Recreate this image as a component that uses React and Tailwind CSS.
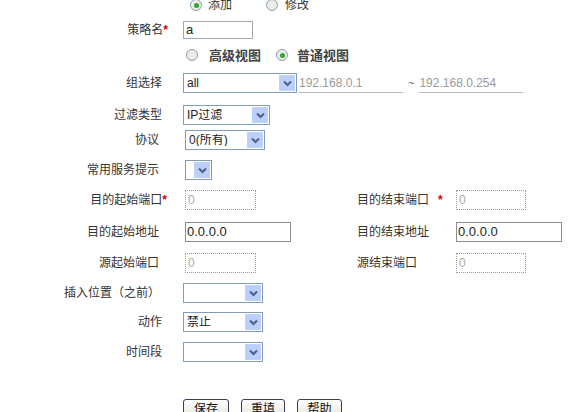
const cjk = { fontFamily: '"Liberation Sans", "Noto Sans CJK SC", sans-serif' };

function Chevron() {
  return (
    <svg width="9" height="7" viewBox="0 0 9 7">
      <path d="M1 1.5 L4.5 5 L8 1.5" fill="none" stroke="#4d6185" strokeWidth="2" />
    </svg>
  );
}

function Select({ value, className }) {
  return (
    <div className={`flex h-[20px] items-center border border-[#7f9db9] bg-white ${className}`}>
      <span className="flex-1 truncate pl-[3px] text-[12px] leading-none text-[#222]">{value}</span>
      <span className="m-[1px] flex h-[16px] w-[16px] shrink-0 items-center justify-center border border-[#c0d2f8] bg-[#bccffa]">
        <Chevron />
      </span>
    </div>
  );
}

function Radio({ checked }) {
  return (
    <span className="flex h-[12px] w-[12px] shrink-0 items-center justify-center rounded-full border border-[#8aa0b6] bg-[#ecece6]">
      {checked && <span className="h-[5px] w-[5px] rounded-full bg-[#2fa52f]" />}
    </span>
  );
}

function Star() {
  return <span className="text-[12px] font-bold leading-none text-[#d40000]">*</span>;
}

function Label({ children, className }) {
  return (
    <div className={`flex w-[183px] shrink-0 items-center justify-end text-[12px] leading-none text-[#333] ${className}`}>
      {children}
    </div>
  );
}

function Btn({ children, className }) {
  return (
    <div className={`flex h-[20px] items-center justify-center rounded-[3px] border border-[#3d3a5c] bg-gradient-to-b from-white to-[#e6e3d8] text-[12px] text-[#111] ${className}`}>
      {children}
    </div>
  );
}

export default function App() {
  return (
    <div className="h-[412px] w-[585px] overflow-hidden bg-white" style={cjk}>
      <div className="flex h-[10px] items-center text-[12px] text-[#333]">
        <div className="ml-[190px] flex items-center gap-[6px]">
          <Radio checked />
          <span className="leading-none">添加</span>
        </div>
        <div className="ml-[34px] flex items-center gap-[7px]">
          <Radio />
          <span className="leading-none">修改</span>
        </div>
      </div>

      <div className="mt-[11px] flex h-[18px] items-center">
        <Label className="pr-[15px]">策略名<Star /></Label>
        <div className="flex h-[18px] w-[70px] items-center border border-[#a3a8ad] bg-white pl-[2px] text-[13px] text-[#222]">a</div>
      </div>

      <div className="mt-[11px] flex h-[10px] items-center text-[13px] font-bold text-[#444]">
        <div className="ml-[186px] flex items-center gap-[11px]">
          <Radio />
          <span className="leading-none">高级视图</span>
        </div>
        <div className="ml-[15px] flex items-center gap-[9px]">
          <Radio checked />
          <span className="leading-none">普通视图</span>
        </div>
      </div>

      <div className="mt-[13px] flex h-[20px] items-center">
        <Label className="pr-[21px]">组选择</Label>
        <Select value="all" className="w-[114px]" />
        <div className="ml-[2px] flex h-[20px] w-[104px] items-center border-b border-[#b8b8b8] pt-[1px] text-[12px] text-[#9a9a9a]">192.168.0.1</div>
        <span className="mx-[5px] text-[11px] text-[#555]">~</span>
        <div className="flex h-[20px] w-[104px] items-center border-b border-[#b8b8b8] pt-[1px] text-[12px] text-[#9a9a9a]">192.168.0.254</div>
      </div>

      <div className="mt-[12px] flex h-[20px] items-center">
        <Label className="pr-[21px]">过滤类型</Label>
        <Select value="IP过滤" className="w-[87px]" />
      </div>

      <div className="mt-[5px] flex h-[20px] items-center">
        <Label className="pr-[24px]">协议</Label>
        <Select value="0(所有)" className="ml-[2px] w-[80px]" />
      </div>

      <div className="mt-[10px] flex h-[20px] items-center">
        <Label className="pr-[24px]">常用服务提示</Label>
        <Select value="" className="ml-[2px] w-[27px]" />
      </div>

      <div className="mt-[10px] flex h-[20px] items-center">
        <Label className="pr-[16px]">目的起始端口<Star /></Label>
        <div className="w-[174px] shrink-0">
          <div className="ml-[2px] flex h-[20px] w-[71px] items-center border border-dotted border-[#9c9c9c] pl-[2px] text-[12px] text-[#aaa]">0</div>
        </div>
        <div className="flex w-[99px] shrink-0 items-center text-[12px] leading-none text-[#333]">
          目的结束端口<span className="ml-[9px]"><Star /></span>
        </div>
        <div className="flex h-[20px] w-[70px] items-center border border-dotted border-[#9c9c9c] pl-[2px] text-[12px] text-[#aaa]">0</div>
      </div>

      <div className="mt-[12px] flex h-[20px] items-center">
        <Label className="pr-[24px]">目的起始地址</Label>
        <div className="w-[174px] shrink-0">
          <div className="ml-[2px] flex h-[20px] w-[106px] items-center border border-[#8d8d8d] pl-[1px] text-[13px] text-[#222]">0.0.0.0</div>
        </div>
        <div className="flex w-[99px] shrink-0 items-center text-[12px] leading-none text-[#333]">目的结束地址</div>
        <div className="flex h-[20px] w-[106px] items-center border border-[#8d8d8d] pl-[1px] text-[13px] text-[#222]">0.0.0.0</div>
      </div>

      <div className="mt-[11px] flex h-[20px] items-center">
        <Label className="pr-[24px]">源起始端口</Label>
        <div className="w-[174px] shrink-0">
          <div className="ml-[2px] flex h-[20px] w-[71px] items-center border border-dotted border-[#9c9c9c] pl-[2px] text-[12px] text-[#aaa]">0</div>
        </div>
        <div className="flex w-[99px] shrink-0 items-center text-[12px] leading-none text-[#333]">源结束端口</div>
        <div className="flex h-[20px] w-[70px] items-center border border-dotted border-[#9c9c9c] pl-[2px] text-[12px] text-[#aaa]">0</div>
      </div>

      <div className="mt-[10px] flex h-[20px] items-center">
        <Label className="pr-[23px]">插入位置（之前）</Label>
        <Select value="" className="w-[80px]" />
      </div>

      <div className="mt-[9px] flex h-[20px] items-center">
        <Label className="pr-[21px]">动作</Label>
        <Select value="禁止" className="w-[80px]" />
      </div>

      <div className="mt-[10px] flex h-[20px] items-center">
        <Label className="pr-[21px]">时间段</Label>
        <Select value="" className="w-[80px]" />
      </div>

      <div className="ml-[183px] mt-[37px] flex items-center gap-[12px]">
        <Btn className="w-[46px]">保存</Btn>
        <Btn className="w-[44px]">重填</Btn>
        <Btn className="w-[45px]">帮助</Btn>
      </div>
    </div>
  );
}
